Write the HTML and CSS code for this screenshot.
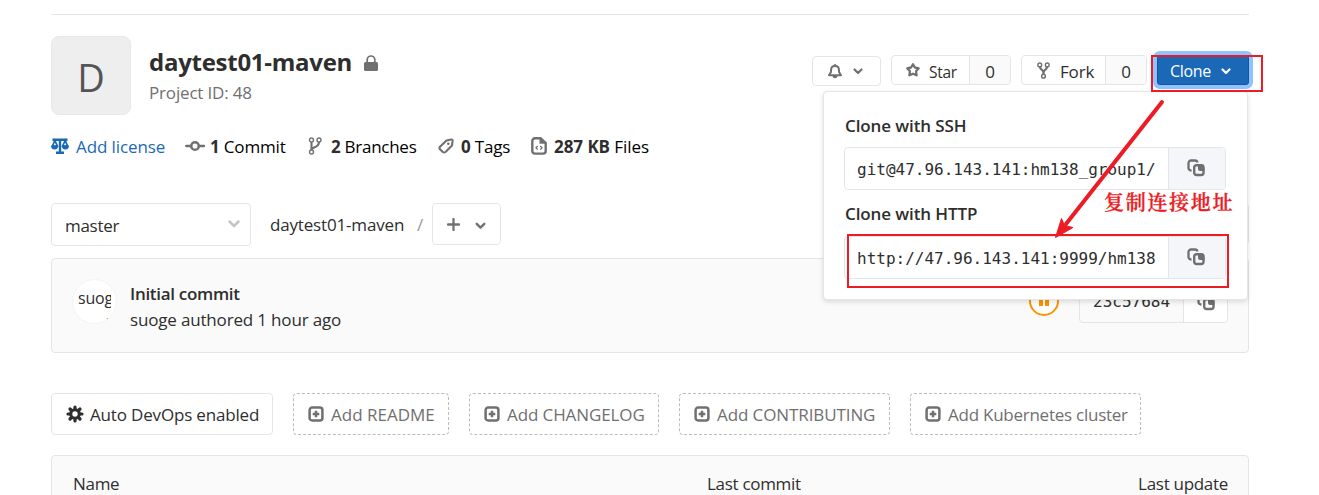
FILE: index.html
```html
<!DOCTYPE html>
<html lang="en">
<head>
<meta charset="utf-8">
<title>daytest01-maven</title>
<link rel="stylesheet" href="styles.css">
</head>
<body>
<svg class="defs" width="0" height="0">
  <symbol id="chevron" viewBox="0 0 12 12"><path d="M2.500 4.500L6 8l3.500-3.500" fill="none" stroke="currentColor" stroke-width="2.200" stroke-linecap="round" stroke-linejoin="round"/></symbol>
  <symbol id="fork" viewBox="0 0 16 18"><g fill="none" stroke="currentColor" stroke-width="1.500"><circle cx="4" cy="3" r="2"/><circle cx="12" cy="3" r="2"/><circle cx="8" cy="15" r="2"/></g><path d="M4.200 5C4.400 8.500 8 8 8 11v2M11.800 5C11.600 8.500 8 8 8 11" fill="none" stroke="currentColor" stroke-width="2.400"/></symbol>
  <symbol id="branch" viewBox="0 0 14 18"><g fill="none" stroke="currentColor" stroke-width="1.400"><circle cx="3.500" cy="3" r="2"/><circle cx="11" cy="3" r="2"/><circle cx="3.500" cy="15" r="2"/></g><path d="M3.500 5v8M11 5c0 4-2.500 4.500-5 5.500-1.500.7-2.500 1-2.500 2.500" fill="none" stroke="currentColor" stroke-width="2.100"/></symbol>
  <symbol id="copy" viewBox="0 0 18 18"><path d="M4.500 11.500H4A2.500 2.500 0 0 1 1.500 9V4A2.500 2.500 0 0 1 4 1.500h4A2.500 2.500 0 0 1 10.500 3.500" fill="none" stroke="currentColor" stroke-width="2.300"/><rect x="7.200" y="6.200" width="9.300" height="9.800" rx="2.200" fill="none" stroke="currentColor" stroke-width="2.400"/><path d="M11 5.500h3.500L17.500 9v3h-4.500a2 2 0 0 1-2-2z" fill="currentColor"/></symbol>
  <symbol id="plus-box" viewBox="0 0 16 16"><rect x="1.600" y="1.600" width="12.800" height="12.800" rx="2.500" fill="none" stroke="currentColor" stroke-width="2.500"/><path d="M8 4.700v6.600M4.700 8h6.600" stroke="currentColor" stroke-width="2.500"/></symbol>
</svg>
<main class="page">
  <header class="project">
    <div class="avatar">D</div>
    <div class="heading">
      <h1 class="title"><span>daytest01-maven</span><svg class="lock" width="14" height="16" viewBox="0 0 14 16"><path d="M3.200 8V4.800a3.800 3.800 0 0 1 7.600 0V8" fill="none" stroke="currentColor" stroke-width="1.700"/><rect y="7" width="14" height="9" rx="1.500" fill="currentColor"/></svg></h1>
      <div class="project-id">Project ID: 48</div>
    </div>
    <div class="actions">
      <button class="btn notify"><svg width="16" height="16" viewBox="0 0 16 16"><path d="M4 9V7.200C4 4.500 5.800 3 8 3s4 1.500 4 4.200V9l2 3.200H2z" fill="none" stroke="currentColor" stroke-width="2" stroke-linejoin="round"/><path d="M6.500 2.500a1.500 1.500 0 0 1 3 0zM5.500 13h5a2.500 2.200 0 0 1-5 0z" fill="currentColor"/></svg><svg class="chev" width="12" height="12"><use href="#chevron"/></svg></button>
      <div class="btn split star"><span class="label"><svg width="16" height="16" viewBox="0 0 16 16"><path d="M8 2.200l1.900 3.300 3.800.8-2.600 3 .5 4-3.600-1.600-3.600 1.600.5-4-2.600-3 3.800-.8z" fill="none" stroke="currentColor" stroke-width="2.300" stroke-linejoin="round"/></svg><span>Star</span></span><span class="count">0</span></div>
      <div class="btn split forks"><span class="label"><svg width="15" height="17"><use href="#fork"/></svg><span>Fork</span></span><span class="count">0</span></div>
      <button class="clone"><span>Clone</span><svg width="12" height="12"><use href="#chevron"/></svg></button>
    </div>
  </header>

  <nav class="stats">
    <a class="stat license"><svg width="18" height="16" viewBox="0 0 18 16"><path d="M1.500.5h15V3h-15zM7.800 1h2.400v13H7.800zM5 13.500h8V16H5z" fill="currentColor"/><path d="M3.800 2.500L1.500 8h4.800zM14.200 2.500L11.700 8h4.800z" fill="none" stroke="currentColor" stroke-width="1.700"/><path d="M0 7.500h7.200a3.600 4 0 0 1-7.200 0zM10.800 7.500H18a3.600 4 0 0 1-7.200 0z" fill="currentColor"/></svg><span>Add license</span></a>
    <a class="stat commits"><svg width="20" height="12" viewBox="0 0 20 12"><circle cx="10" cy="6" r="3.800" fill="none" stroke="currentColor" stroke-width="2.500"/><path d="M1.200 6h5M14 6h5" stroke="currentColor" stroke-width="2.300" stroke-linecap="round"/></svg><span><b>1</b> Commit</span></a>
    <a class="stat branches"><svg width="14" height="18"><use href="#branch"/></svg><span><b>2</b> Branches</span></a>
    <a class="stat tags"><svg width="16" height="16" viewBox="0 0 16 16"><path d="M8.500 2.500L13.300 1.500Q14.700 1.500 14.600 2.700L14 7.500 7.500 14Q6 15 4.800 14L1.800 11Q1 9.800 2 8.700z" fill="none" stroke="currentColor" stroke-width="2.100" stroke-linejoin="round"/><circle cx="10.300" cy="5.800" r="1.300" fill="currentColor"/></svg><span><b>0</b> Tags</span></a>
    <a class="stat files"><svg width="16" height="18" viewBox="0 0 16 18"><path d="M4 1.300h5.500L14.700 6v8a2.600 2.600 0 0 1-2.600 2.600H3.900A2.600 2.600 0 0 1 1.300 14V4A2.700 2.700 0 0 1 4 1.300z" fill="none" stroke="currentColor" stroke-width="2.400"/><path d="M8.500 1v5.800H15z" fill="currentColor"/><path d="M6.700 9L5 10.800l1.700 1.800M9.300 9L11 10.800l-1.700 1.800" fill="none" stroke="currentColor" stroke-width="1.300"/></svg><span><b>287 KB</b> Files</span></a>
  </nav>

  <div class="tree-bar">
    <div class="ref-select"><span>master</span><svg width="16" height="16" viewBox="0 0 16 16"><path d="M3.500 5.500L8 10l4.500-4.500" fill="none" stroke="currentColor" stroke-width="2.500" stroke-linecap="round"/></svg></div>
    <span class="crumb">daytest01-maven</span><span class="slash">/</span>
    <button class="btn add"><svg width="13" height="13" viewBox="0 0 13 13"><path d="M6.500 1v11M1 6.500h11" stroke="currentColor" stroke-width="2.300" stroke-linecap="round"/></svg><svg width="13" height="13"><use href="#chevron"/></svg></button>
    <button class="btn download"></button>
  </div>

  <section class="commit">
    <div class="user"><div class="alt">suoge<br><span class="alt-tail">'</span></div></div>
    <div class="commit-text"><strong>Initial commit</strong><span>suoge authored 1 hour ago</span></div>
    <svg class="pipeline" width="30" height="30" viewBox="0 0 30 30"><circle cx="15" cy="15" r="14" fill="#fff" stroke="#fc9403" stroke-width="2"/><path d="M10 10h4v10h-4zM16 10h4v10h-4z" fill="#fc9403"/></svg>
    <div class="sha"><code>23c57684</code><span class="sha-copy"><svg width="18" height="18"><use href="#copy"/></svg></span></div>
  </section>

  <div class="quick">
    <a class="btn devops"><svg width="18" height="18" viewBox="0 0 18 18"><path d="M9 2v14M2 9h14M4 4l10 10M14 4L4 14" stroke="currentColor" stroke-width="3.200" stroke-linecap="round"/><circle cx="9" cy="9" r="5.800" fill="currentColor"/><circle cx="9" cy="9" r="2.700" fill="#fff"/></svg><span>Auto DevOps enabled</span></a>
    <a class="dashed readme"><svg width="16" height="16"><use href="#plus-box"/></svg><span>Add README</span></a>
    <a class="dashed changelog"><svg width="16" height="16"><use href="#plus-box"/></svg><span>Add CHANGELOG</span></a>
    <a class="dashed contributing"><svg width="16" height="16"><use href="#plus-box"/></svg><span>Add CONTRIBUTING</span></a>
    <a class="dashed kubernetes"><svg width="16" height="16"><use href="#plus-box"/></svg><span>Add Kubernetes cluster</span></a>
  </div>

  <div class="files-table"><span class="col-name">Name</span><span class="col-commit">Last commit</span><span class="col-update">Last update</span></div>
</main>

<div class="menu">
  <div class="menu-label">Clone with SSH</div>
  <div class="url"><code>git@47.96.143.141:hm138_group1/</code><span class="url-copy"><svg width="18" height="18"><use href="#copy"/></svg></span></div>
  <div class="menu-label second">Clone with HTTP</div>
  <div class="url"><code>http://47.96.143.141:9999/hm138</code><span class="url-copy"><svg width="18" height="18"><use href="#copy"/></svg></span></div>
</div>

<svg class="marks" width="1319" height="495" viewBox="0 0 1319 495">
  <g fill="none" stroke="#ed1c24" stroke-width="2"><rect x="1152" y="56" width="110" height="35"/><rect x="848" y="235" width="380" height="52"/></g>
  <path d="M1162 102L1066 224" stroke="#ed1c24" stroke-width="4" stroke-linecap="round"/>
  <path d="M1055.500 237.500L1061.500 218.500 1064.500 225.500 1073 227.500z" fill="#ed1c24" stroke="#ed1c24" stroke-linejoin="round"/>
</svg>
<div class="note">复制连接地址</div>
</body>
</html>
```
FILE: styles.css
```css
* { box-sizing: border-box; }
body { margin: 0; width: 1319px; height: 495px; overflow: hidden; position: relative; background: #fff; color: #2e2e2e; font: 17px/26px "Open Sans", "Noto Sans", sans-serif; letter-spacing: -0.17px; }
svg { display: block; flex: none; }
.defs { position: absolute; }
button { font: inherit; letter-spacing: inherit; }
span { white-space: nowrap; }
code { font: 16px/26px "DejaVu Sans Mono", monospace; letter-spacing: 0; }
.page { width: 1198px; margin: 14px 0 0 51px; border-top: 1px solid #e5e5e5; }

.project { display: flex; height: 79px; margin-top: 21px; }
.avatar { width: 80px; height: 79px; border: 1px solid #e8e8e8; border-radius: 8px; background: #eee; color: #555; font-size: 38px; line-height: 80px; text-align: center; }
.heading { margin-left: 18px; padding-top: 9px; }
.title { display: flex; align-items: center; margin: 0; font-size: 24px; line-height: 34px; font-weight: 700; letter-spacing: -0.27px; }
.lock { margin: 2px 0 0 12px; color: #707070; }
.project-id { color: #707070; line-height: 27px; }
.actions { display: flex; margin-left: auto; padding-top: 19px; }
.btn { display: flex; align-items: center; border: 1px solid #e5e5e5; border-radius: 4px; background: #fff; color: #2e2e2e; }
.btn svg { color: #707070; }
.notify { width: 69px; height: 30px; padding: 0 0 0 14px; margin: 1px 10px 0 0; }
.notify .chev { margin-left: 9px; }
.split { height: 30px; align-items: stretch; overflow: hidden; }
.label { display: flex; align-items: center; flex: 1; padding-left: 13px; }
.count { display: flex; align-items: center; justify-content: center; border-left: 1px solid #e5e5e5; background: #fafafa; width: 41px; padding-top: 3px; }
.star { width: 120px; margin-right: 10px; }
.star .label > span { font-size: 15.500px; margin-left: 8px; padding-top: 3px; letter-spacing: -0.3px; }
.forks { width: 126px; margin-right: 10px; }
.forks .label { padding-left: 14px; }
.forks .label > span { margin-left: 9px; padding-top: 3px; }
.clone { display: flex; align-items: center; gap: 9px; width: 92px; height: 30px; padding: 2px 0 0 12px; border: 1px solid #1753a0; border-radius: 3px; background: #1b69b6; color: #fff; font-size: 16px; letter-spacing: -0.3px; box-shadow: 0 0 0 4px #8ec3ff; }

.stats { display: flex; height: 26px; margin-top: 19px; }
.stat { display: flex; align-items: center; color: #000; }
.stat svg { color: #707070; margin-top: -3px; }
.stat b { color: #2e2e2e; }
.license { width: 134px; gap: 7px; color: #1b69b6; letter-spacing: -0.1px; }
.license svg { color: #1b69b6; }
.commits { width: 123px; gap: 5px; }
.branches { width: 130px; gap: 9px; letter-spacing: -0.27px; }
.tags { width: 93px; gap: 7px; }
.files { gap: 7px; letter-spacing: -0.05px; }

.tree-bar { display: flex; height: 43px; margin-top: 43px; }
.ref-select { display: flex; align-items: center; justify-content: space-between; width: 200px; padding: 2px 8px 0 13px; border: 1px solid #e5e5e5; border-radius: 4px; letter-spacing: -0.3px; }
.ref-select svg { color: #c4c4c4; margin-top: -4px; }
.crumb { margin-left: 19px; width: 147px; line-height: 43px; }
.slash { color: #999; line-height: 43px; width: 15px; }
.add { width: 69px; height: 42px; padding: 0 0 0 14px; gap: 14px; }
.add svg + svg { margin-top: 2px; }
.download { width: 42px; height: 42px; margin-left: auto; }

.commit { display: flex; height: 95px; margin-top: 12px; padding: 20px 20px 0 20px; border: 1px solid #e5e5e5; border-radius: 4px; background: #fafafa; }
.user { width: 45px; height: 45px; border: 1px solid #f4f4f4; border-radius: 50%; background: #fff; overflow: hidden; }
.alt { width: 33px; height: 39px; margin: 5px 0 0 5px; overflow: hidden; font-size: 16px; line-height: 26px; }
.alt-tail { margin-left: 28px; }
.commit-text { display: flex; flex-direction: column; margin: 2px auto 0 13px; }
.commit-text strong { font-weight: 600; letter-spacing: -0.3px; }
.pipeline { margin: 7px 20px 0 0; }
.sha { display: flex; width: 149px; height: 42px; margin-top: 2px; border: 1px solid #e5e5e5; border-radius: 4px; overflow: hidden; }
.sha code { width: 103px; padding-left: 13px; line-height: 40px; }
.sha-copy { flex: 1; padding: 11px 0 0 13px; border-left: 1px solid #e5e5e5; background: #fff; color: #707070; }

.quick { display: flex; gap: 20px; margin-top: 40px; height: 42px; }
.quick a { padding-left: 14px; }
.quick a > span { padding-top: 1px; }
.quick .devops { width: 222px; gap: 6px; }
.quick .devops svg { color: #2e2e2e; }
.dashed { display: flex; align-items: center; gap: 7px; border: 1px dashed #bbb; border-radius: 4px; color: #707070; }
.readme { width: 156px; letter-spacing: 0; }
.changelog { width: 190px; letter-spacing: -0.1px; }
.contributing { width: 211px; letter-spacing: -0.1px; }
.kubernetes { width: 231px; letter-spacing: -0.25px; }

.files-table { display: flex; height: 60px; margin-top: 20px; padding: 15px 20px 0 21px; border: 1px solid #e5e5e5; border-radius: 4px; background: #fafafa; letter-spacing: -0.3px; }
.col-name { width: 634px; }
.col-update { margin-left: auto; }

.menu { position: absolute; left: 823px; top: 91px; width: 425px; height: 209px; padding: 21px 21px 0 20px; border: 1px solid #e5e5e5; border-radius: 4px; background: #fff; box-shadow: 0 2px 5px rgba(0,0,0,.13); }
.menu-label { font-weight: 600; line-height: 26px; padding-left: 1px; letter-spacing: -0.1px; }
.url { display: flex; width: 382px; height: 43px; margin-top: 8px; border: 1px solid #e5e5e5; border-radius: 4px; overflow: hidden; }
.url code { width: 323px; padding-left: 12px; line-height: 43px; white-space: nowrap; }
.url-copy { flex: 1; padding: 11px 0 0 18px; border-left: 1px solid #e5e5e5; background: #f5f6f9; color: #707070; }
.second { margin-top: 11px; }
.second + .url { margin-top: 9px; }
.marks { position: absolute; left: 0; top: 0; }
.note { position: absolute; left: 1104px; top: 188px; color: #ed1c24; font: 600 20px/28px "Noto Serif CJK SC", "Noto Sans CJK SC", serif; letter-spacing: 1.700px; white-space: nowrap; -webkit-text-stroke: 0.3px #ed1c24; }
```
